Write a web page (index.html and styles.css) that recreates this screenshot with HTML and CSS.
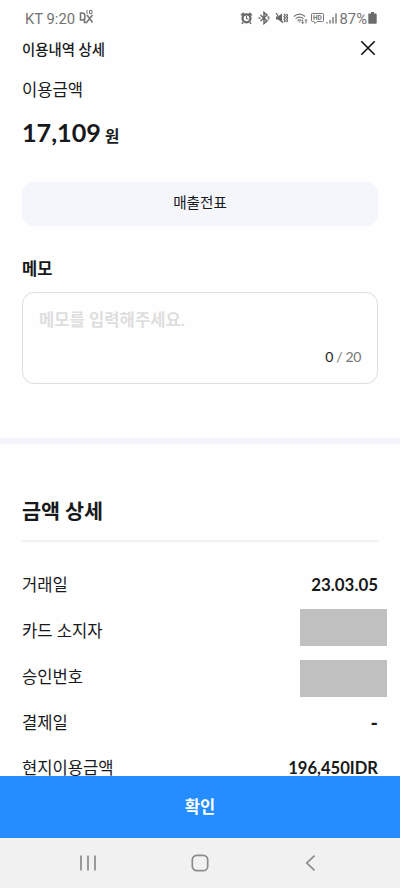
FILE: index.html
```html
<!DOCTYPE html>
<html lang="ko">
<head>
<meta charset="utf-8">
<meta name="viewport" content="width=device-width, initial-scale=1">
<title>이용내역 상세</title>
<link rel="stylesheet" href="styles.css">
</head>
<body>
<div class="screen">
  <div class="status">
    <span class="carrier">KT 9:20</span>
    <svg class="dex" width="15" height="16" viewBox="0 0 15 16" fill="none" stroke="#777" stroke-width="1.600"><path d="M1.500 4v7h2q2.500 0 2.500-3.500T3.500 4zM5.500 9v4.500h3M8 6l5.500 7.500M13.500 6L7.500 13.500"/><path d="M8 1v4M10.500 1.500h2.500v3h-2.500z" stroke-width="1"/></svg>
    <div class="indicators">
      <svg width="13" height="14" viewBox="0 0 12 14" fill="none" stroke="#666"><circle cx="6" cy="7.300" r="4" stroke-width="2.200"/><path d="M.7 4.300L3.300 2M11.300 4.300L8.700 2M2.500 11.500l-1 1.300M9.500 11.500l1 1.300" stroke-width="1.800"/><path d="M6 5v2.800h2"/></svg>
      <svg width="12" height="14" viewBox="0 0 12 14" fill="none" stroke="#666" stroke-width="1.500"><path d="M2.500 4l6.500 6-3 2.500v-11L9 4l-6.500 6"/><path d="M.5 7h2M9.500 7h2M10.500 5v.7M10.500 8.500v.7"/></svg>
      <svg width="13" height="14" viewBox="0 0 13 14" fill="none" stroke="#666" stroke-width="1.300"><path d="M1 5.500h2L7 2.500v9L3 8.500H1z" fill="#666" stroke="none"/><path d="M1 2l7 10M9 3l1.200 1.300L9 5.700 10.200 7 9 8.300l1.200 1.400L9 11M11.500 3l1.200 1.300-1.200 1.400L12.700 7l-1.200 1.300 1.200 1.400-1.200 1.300"/></svg>
      <svg class="wifi" width="15" height="14" viewBox="0 0 15 14" fill="none" stroke="#777" stroke-width="1.200"><path d="M.8 5.500Q6.500.8 12.200 5.500M2.600 7.600Q6.500 4.500 10.400 7.600M4.400 9.600Q6.500 8 8.600 9.600"/><path d="M5.300 10.500h2.400l-1.200 1.300z" fill="#777" stroke="none"/><path d="M9.700 8.500v4M8.500 11.300l1.200 1.300 1.200-1.300M13 12.500v-4M11.900 9.700L13 8.500l1.100 1.200" stroke-width="1"/></svg>
      <svg class="hd" width="13" height="14" viewBox="0 0 13 14"><path d="M1.500 2.500h10q1 0 1 1v6q0 1-1 1H6l-2 2-1-2H1.500q-1 0-1-1v-6q0-1 1-1z" fill="none" stroke="#777"/><text x="2" y="9">HD</text></svg>
      <svg width="12" height="14" viewBox="0 0 12 14" fill="none" stroke="#777" stroke-width="1.400"><path d="M1 11.300v1.200M4 9v3.500M7 6v6.500M10 2.500v10"/></svg>
      <span class="percent">87%</span>
      <svg class="battery" width="9" height="12" viewBox="0 0 9 12"><path d="M3 0h3v1.500h2q.7 0 .7.700v8.800q0 .8-.8.800H1.100q-.8 0-.8-.8V2.200q0-.7.700-.7h2z" fill="#6b6b6b"/></svg>
    </div>
  </div>
  <header class="header">
    <h1>이용내역 상세</h1>
    <svg width="16" height="16" viewBox="0 0 16 16" fill="none" stroke="#111" stroke-width="1.600"><path d="M1.300 1.300l13.400 13.400M14.700 1.300L1.300 14.700"/></svg>
  </header>
  <main class="content">
    <section class="summary">
      <div class="caption">이용금액</div>
      <div class="amount"><span class="figure">17,109</span><span class="won">원</span></div>
      <div class="receipt">매출전표</div>
      <h2 class="memo-title">메모</h2>
      <div class="memo">
        <div class="placeholder">메모를 입력해주세요.</div>
        <div class="counter"><span>0</span> / 20</div>
      </div>
    </section>
    <div class="divider"></div>
    <section class="details">
      <h2>금액 상세</h2>
      <div class="row"><span>거래일</span><b class="date">23.03.05</b></div>
      <div class="row"><span>카드 소지자</span><i class="mask holder"></i></div>
      <div class="row"><span>승인번호</span><i class="mask approval"></i></div>
      <div class="row"><span>결제일</span><b class="none">-</b></div>
      <div class="row"><span>현지이용금액</span><b>196,450IDR</b></div>
    </section>
  </main>
  <div class="confirm">확인</div>
  <nav class="nav">
    <svg width="18" height="18" viewBox="0 0 18 18" fill="none" stroke="#8b8b8b" stroke-width="1.700"><path d="M2 1.500v15M9 1.500v15M16 1.500v15"/></svg>
    <svg width="18" height="18" viewBox="0 0 18 18" fill="none" stroke="#8b8b8b" stroke-width="1.700"><rect x="1.300" y="1.300" width="15.400" height="15.400" rx="4.500"/></svg>
    <svg width="18" height="18" viewBox="0 0 18 18" fill="none" stroke="#8b8b8b" stroke-width="1.700"><path d="M12.500 1.700L4.800 9l7.700 7.300"/></svg>
  </nav>
</div>
</body>
</html>
```
FILE: styles.css
```css
* { box-sizing: border-box; }
body { margin: 0; background: #fefefe; }
h1, h2 { margin: 0; }
svg { display: block; flex: none; }

.screen {
  display: flex;
  flex-direction: column;
  width: 400px;
  height: 888px;
  overflow: hidden;
  color: #18191b;
  font-family: Lato, "Noto Sans CJK KR", sans-serif;
  white-space: nowrap;
}

.status {
  display: flex;
  align-items: center;
  height: 36px;
  padding: 0 23px 0 25px;
  color: #737373;
  font: 14.800px/20px Roboto, sans-serif;
}
.carrier, .percent { padding-top: 1px; }
.dex { margin: 0 0 2px 4px; }
.indicators { display: flex; align-items: center; margin-left: auto; }
.indicators svg { margin: 0 5px 1px 0; }
.indicators .wifi { margin-right: 3px; }
.indicators .hd { margin-right: 2px; }
.hd text { font: 700 6.500px Roboto, sans-serif; fill: #777; }
.percent { margin-left: -3px; }
.indicators .battery { margin: 0 0 0 1px; }

.header {
  display: flex;
  align-items: center;
  justify-content: space-between;
  height: 25px;
  padding: 0 24px 0 22px;
}
.header h1 { padding-top: 1px; font-size: 14.400px; font-weight: 500; line-height: 25px; }
.header svg { margin-bottom: 2px; }

.content { flex: 1; min-height: 0; overflow: hidden; }
.summary { height: 377px; padding: 17px 22px 0; }
.caption { font-size: 16.600px; font-weight: 400; line-height: 24px; }
.amount {
  display: flex;
  align-items: baseline;
  gap: 4px;
  height: 36px;
  margin-top: 12px;
  line-height: 36px;
}
.figure { font-size: 25.200px; font-weight: 700; }
.won { font-size: 15.600px; font-weight: 700; }
.receipt {
  height: 44px;
  margin-top: 32px;
  border-radius: 12px;
  background: #f4f6fc;
  font-size: 14.600px;
  line-height: 41px;
  text-align: center;
}
.memo-title { margin-top: 31px; font-size: 16.500px; line-height: 24px; }
.memo {
  height: 92px;
  margin-top: 11px;
  padding: 15px 16px 0;
  border: 1px solid #dedede;
  border-radius: 12px;
}
.placeholder { color: #dedede; font-size: 16.650px; font-weight: 700; line-height: 24px; }
.counter { margin-top: 15px; color: #777; font-size: 14px; letter-spacing: -0.350px; line-height: 20px; text-align: right; }
.counter span { color: #18191b; }
.divider { height: 6px; background: #f4f5fc; }

.details { padding: 53px 22px 0; }
.details h2 {
  height: 45px;
  margin-bottom: 20px;
  border-bottom: 2px solid #f2f2f2;
  font-size: 20.700px;
  line-height: 28px;
}
.row {
  display: flex;
  align-items: center;
  justify-content: space-between;
  height: 45.750px;
  font-size: 16.600px;
  line-height: 24px;
}
.row span { padding-top: 1px; }
.date { font-size: 16.900px; }
.none { font-size: 20px; }
.mask { width: 87px; height: 37px; margin-right: -9px; background: #c0c0c0; }
.holder { margin-bottom: 6px; }
.approval { margin-top: 5px; }

.confirm {
  flex: none;
  height: 62px;
  background: #258dff;
  color: #fff;
  font-size: 16.500px;
  font-weight: 700;
  line-height: 63px;
  text-align: center;
}
.nav {
  display: flex;
  flex: none;
  align-items: center;
  justify-content: space-between;
  height: 50px;
  padding: 0 80px 1px 79px;
  background: #f1f1f1;
}
```
